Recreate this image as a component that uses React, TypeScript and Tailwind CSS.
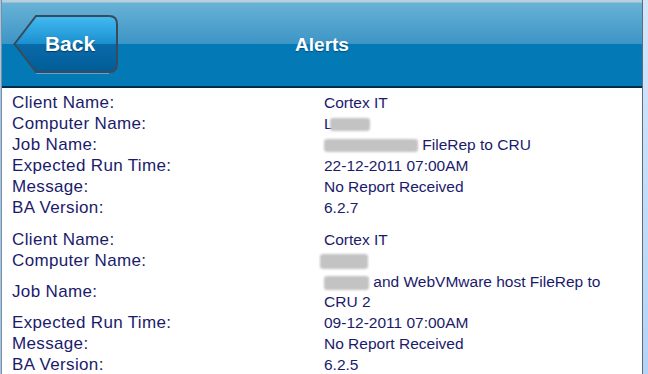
import React from 'react';

type Row = { label: string; value: React.ReactNode };

// gray smudge used to hide a value in the screenshot
function Smudge({ w, h }: { w: number; h: number }) {
    return (
        <span
            className="inline-block align-middle rounded-[3px] bg-[#c3c3c3] blur-[0.8px]"
            style={{ width: w, height: h }}
        />
    );
}

function BackButton() {
    return (
        <div className="relative w-[106px] h-[60px] flex items-center justify-center">
            <svg className="absolute inset-0" width="106" height="60" viewBox="0 0 106 60">
                <defs>
                    <linearGradient id="backFill" x1="0" y1="0" x2="0" y2="1">
                        <stop offset="0" stopColor="#44bbf2" />
                        <stop offset="0.5" stopColor="#1a8fcf" />
                        <stop offset="0.5" stopColor="#0a6ba9" />
                        <stop offset="1" stopColor="#005d97" />
                    </linearGradient>
                </defs>
                <path
                    d="M23 2 L96 2 Q104 2 104 10 L104 50 Q104 58 96 58 L23 58 L1.5 30 Z"
                    fill="url(#backFill)"
                    stroke="#3b4a5a"
                    strokeWidth="2"
                />
                <path d="M23 59.5 L96 59.5" stroke="#5aa6d6" strokeWidth="1" />
            </svg>
            <span className="relative pl-[8px] text-[21px] font-bold text-white [text-shadow:0_1px_1px_rgba(0,30,60,0.6)]">
                Back
            </span>
        </div>
    );
}

function AlertBlock({ rows }: { rows: Row[] }) {
    return (
        <div className="grid grid-cols-[312px_1fr] gap-y-px text-[#1b1b6b]">
            {rows.map((r) => (
                <React.Fragment key={r.label}>
                    <div className="flex items-center text-[17px] tracking-[0.35px] leading-[20px]">{r.label}</div>
                    <div className="flex items-center text-[15.5px] leading-[20px]">
                        <div>{r.value}</div>
                    </div>
                </React.Fragment>
            ))}
        </div>
    );
}

export default function App() {
    const first: Row[] = [
        { label: 'Client Name:', value: 'Cortex IT' },
        {
            label: 'Computer Name:',
            value: (
                <span className="inline-flex items-center">
                    <span>L</span>
                    <span className="-ml-[3px]">
                        <Smudge w={40} h={13} />
                    </span>
                </span>
            ),
        },
        {
            label: 'Job Name:',
            value: (
                <span>
                    <Smudge w={94} h={13} /> FileRep to CRU
                </span>
            ),
        },
        { label: 'Expected Run Time:', value: '22-12-2011 07:00AM' },
        { label: 'Message:', value: 'No Report Received' },
        { label: 'BA Version:', value: '6.2.7' },
    ];

    const second: Row[] = [
        { label: 'Client Name:', value: 'Cortex IT' },
        {
            label: 'Computer Name:',
            value: (
                <span className="-ml-[4px]">
                    <Smudge w={48} h={15} />
                </span>
            ),
        },
        {
            label: 'Job Name:',
            value: (
                <span>
                    <Smudge w={45} h={14} /> and WebVMware host FileRep to
                    <br />
                    CRU 2
                </span>
            ),
        },
        { label: 'Expected Run Time:', value: '09-12-2011 07:00AM' },
        { label: 'Message:', value: 'No Report Received' },
        { label: 'BA Version:', value: '6.2.5' },
    ];

    return (
        <div className="w-[648px] h-[374px] flex overflow-hidden bg-white font-['Liberation_Sans',Arial,sans-serif]">
            {/* window edge */}
            <div className="w-[2px] flex">
                <div className="w-px bg-[#a9c3dc]" />
                <div className="w-px bg-[#7890aa]" />
            </div>

            <div className="w-[641px] flex flex-col">
                {/* Header */}
                <header className="h-[88px] shrink-0 border-b-2 border-[#04294a] bg-[linear-gradient(to_bottom,#b7d0dc_0px,#b7d0dc_2px,#68b2d6_3px,#3c95c5_44px,#037ab6_44px,#037ab6_86px)] grid grid-cols-[1fr_auto_1fr] items-center">
                    <div className="pl-[11px] pt-px">
                        <BackButton />
                    </div>
                    <h1 className="pt-[4px] text-[19px] font-bold text-white [text-shadow:0_1px_1px_rgba(0,40,80,0.5)]">
                        Alerts
                    </h1>
                    <div />
                </header>

                {/* Alerts list */}
                <main className="flex-1 px-[10px] pt-[5px] flex flex-col gap-[12px]">
                    <AlertBlock rows={first} />
                    <AlertBlock rows={second} />
                </main>
            </div>

            <div className="w-px bg-[#5c6c7e]" />
            <div className="w-[5px] bg-gradient-to-b from-[#d4e7fa] to-[#b2d4f8]" />
        </div>
    );
}
